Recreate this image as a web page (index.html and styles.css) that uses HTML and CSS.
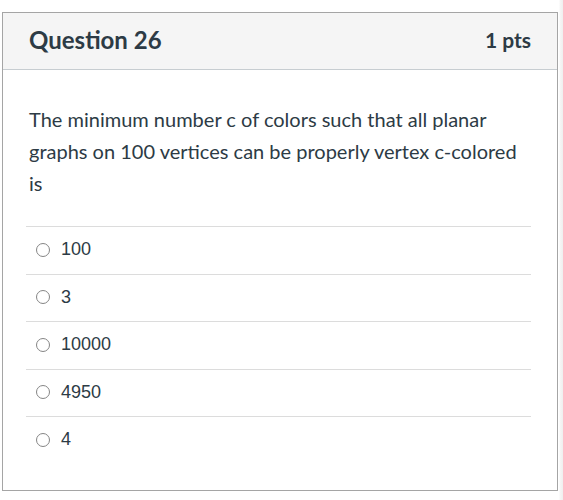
FILE: index.html
```html
<!DOCTYPE html>
<html lang="en">
<head>
<meta charset="utf-8">
<title>Question 26</title>
<link rel="stylesheet" href="styles.css">
</head>
<body>
<div class="page">
  <div class="card">
    <div class="header">
      <span class="title">Question 26</span>
      <span class="points">1 pts</span>
    </div>
    <div class="content">
      <p class="question-text">The minimum number c of colors such that all planar graphs on 100 vertices can be properly vertex c-colored is</p>
      <div class="answers">
        <label class="answer"><span class="radio"></span><span class="answer-text">100</span></label>
        <label class="answer"><span class="radio"></span><span class="answer-text">3</span></label>
        <label class="answer"><span class="radio"></span><span class="answer-text">10000</span></label>
        <label class="answer"><span class="radio"></span><span class="answer-text">4950</span></label>
        <label class="answer"><span class="radio"></span><span class="answer-text">4</span></label>
      </div>
    </div>
  </div>
</div>
</body>
</html>
```

FILE: styles.css
```css
html, body {
  margin: 0;
  padding: 0;
}

body {
  background: linear-gradient(to right, #ffffff 0, #ffffff 559px, #f6f6f6 560px, #efefef 563px);
  min-height: 500px;
  font-family: Lato, "Open Sans", sans-serif;
  color: #2d3b45;
}

.page {
  padding: 12px 0 0 2px;
}

.card {
  width: 554px;
  height: 477px;
  border: 1px solid #a5a5a5;
  background: #ffffff;
}

.header {
  display: flex;
  align-items: center;
  justify-content: space-between;
  height: 52px;
  padding: 0 26px 4px 26px;
  background: #f5f5f5;
  border-bottom: 1px solid #c7cdd1;
}

.title {
  font-size: 24px;
  font-weight: 700;
}

.points {
  font-size: 21px;
  font-weight: 700;
}

.content {
  padding: 33px 26px 0 23px;
}

.question-text {
  margin: 0;
  padding-left: 3px;
  font-size: 20px;
  line-height: 32px;
}

.answers {
  margin-top: 27px;
}

.answer {
  display: flex;
  align-items: center;
  height: 46.5px;
  padding-left: 10px;
  padding-bottom: 1px;
  box-sizing: border-box;
  height: 47.5px;
  border-top: 1px solid #dcdcdc;
  font-family: "Liberation Sans", Arial, sans-serif;
  font-size: 18px;
}

.radio {
  width: 12px;
  height: 12px;
  border: 1px solid #858585;
  border-radius: 50%;
  margin-right: 11px;
  flex: none;
}

.answer-text {
  color: #2d3b45;
}
```
